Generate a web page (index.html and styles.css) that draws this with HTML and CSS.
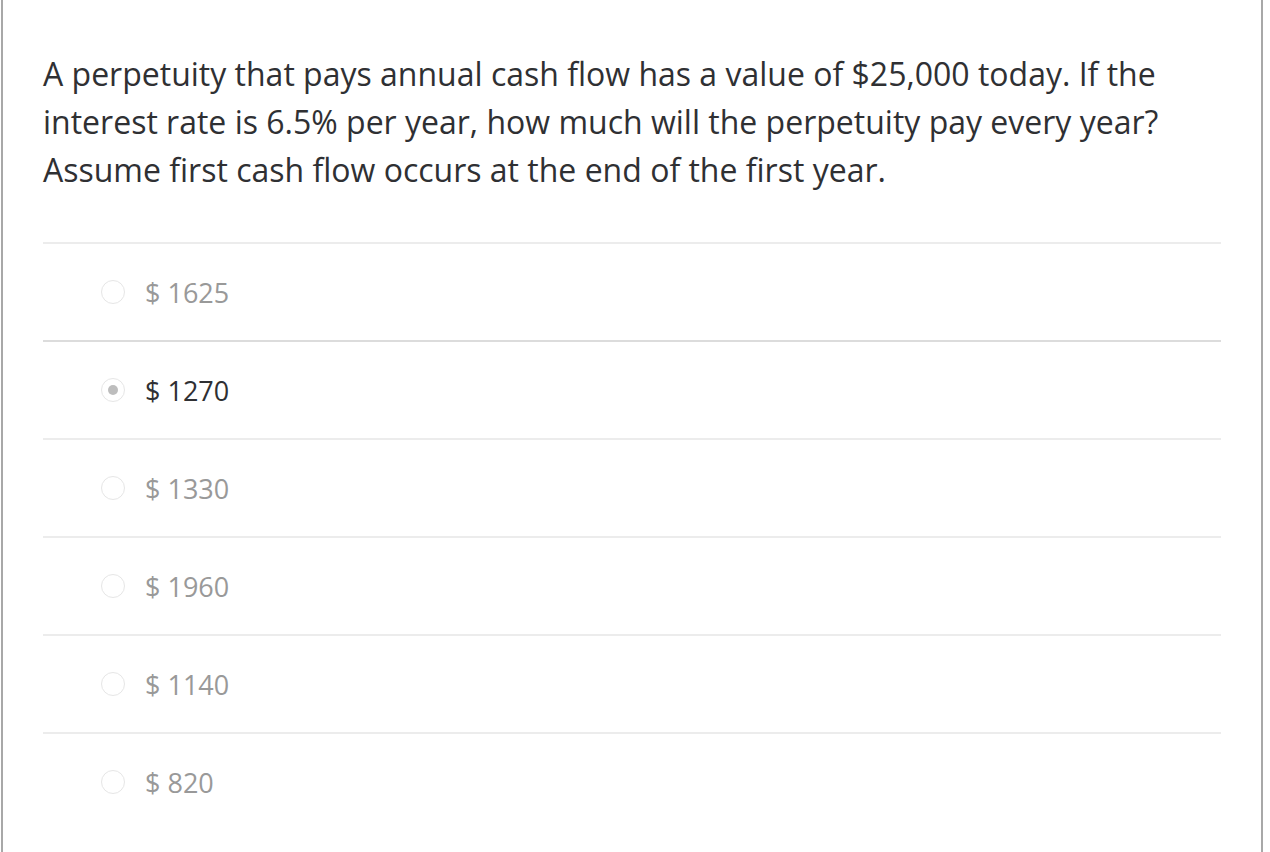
FILE: index.html
```html
<!DOCTYPE html>
<html>
<head>
<meta charset="utf-8">
<link rel="stylesheet" href="styles.css">
</head>
<body>
<div class="frame">
  <p class="question">A perpetuity that pays annual cash flow has a value of $25,000 today. If the interest rate is 6.5% per year, how much will the perpetuity pay every year? Assume first cash flow occurs at the end of the first year.</p>
  <ul class="options">
    <li class="option"><span class="radio"></span><span class="label">$ 1625</span></li>
    <li class="option selected"><span class="radio"></span><span class="label">$ 1270</span></li>
    <li class="option"><span class="radio"></span><span class="label">$ 1330</span></li>
    <li class="option"><span class="radio"></span><span class="label">$ 1960</span></li>
    <li class="option"><span class="radio"></span><span class="label">$ 1140</span></li>
    <li class="option"><span class="radio"></span><span class="label">$ 820</span></li>
  </ul>
</div>
</body>
</html>
```
FILE: styles.css
```css
html, body {
  margin: 0;
  padding: 0;
  background: #fff;
}
body {
  font-family: "Open Sans", "Noto Sans", sans-serif;
}
.frame {
  box-sizing: border-box;
  margin-left: 1px;
  width: 1262px;
  min-height: 852px;
  border-left: 2px solid #a8a8a8;
  border-right: 2px solid #a8a8a8;
  padding: 50px 40px 0 40px;
}
.question {
  margin: 0;
  font-size: 32px;
  line-height: 48px;
  color: #2f3033;
}
.options {
  list-style: none;
  margin: 48px 0 0 0;
  padding: 0;
}
.option {
  display: flex;
  align-items: center;
  height: 96px;
  border-top: 2px solid #ececec;
  padding-left: 58px;
}
.option.selected {
  border-top-color: #dcdcdc;
}
.radio {
  box-sizing: border-box;
  width: 24px;
  height: 24px;
  border-radius: 50%;
  border: 1px solid #e6e6e6;
  display: flex;
  align-items: center;
  justify-content: center;
  margin-right: 20px;
}
.selected .radio::after {
  content: "";
  width: 10px;
  height: 10px;
  border-radius: 50%;
  background: #bdbdbd;
}
.label {
  font-size: 27px;
  color: #999;
}
.selected .label {
  color: #2f3033;
}
```
